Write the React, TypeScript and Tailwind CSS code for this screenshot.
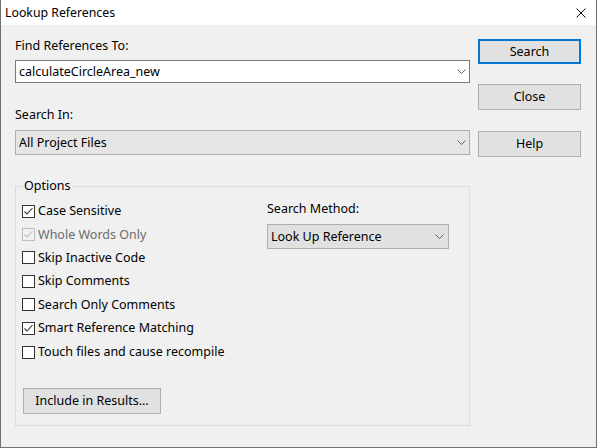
import React from "react";

function Chevron() {
  return (
    <svg width="9" height="5" viewBox="0 0 9 5" className="shrink-0">
      <path d="M0.5 0.5 L4.5 4.5 L8.5 0.5" fill="none" stroke="#606060" strokeWidth="1" />
    </svg>
  );
}

function Check({ color }: { color: string }) {
  return (
    <svg width="11" height="11" viewBox="0 0 11 11">
      <path d="M1.5 5.5 L4 8 L9.5 2" fill="none" stroke={color} strokeWidth="1.1" />
    </svg>
  );
}

type Opt = { label: string; checked?: boolean; disabled?: boolean; h: string };

const options: Opt[] = [
  { label: "Case Sensitive", checked: true, h: "h-[24px]" },
  { label: "Whole Words Only", checked: true, disabled: true, h: "h-[23px]" },
  { label: "Skip Inactive Code", h: "h-[23px]" },
  { label: "Skip Comments", h: "h-[24px]" },
  { label: "Search Only Comments", h: "h-[23px]" },
  { label: "Smart Reference Matching", checked: true, h: "h-[24px]" },
  { label: "Touch files and cause recompile", h: "h-[24px]" },
];

function CheckRow({ o }: { o: Opt }) {
  return (
    <div className={`${o.h} flex items-center`}>
      <div
        className={
          o.disabled
            ? "w-[13px] h-[13px] border border-[#bcbcbc] bg-[#f0f0f0] flex items-center justify-center"
            : "w-[13px] h-[13px] border border-[#333333] bg-white flex items-center justify-center"
        }
      >
        {o.checked ? <Check color={o.disabled ? "#bcbcbc" : "#333333"} /> : null}
      </div>
      <span className={o.disabled ? "ml-[3px] text-[#6d6d6d]" : "ml-[3px]"}>{o.label}</span>
    </div>
  );
}

export default function App() {
  return (
    <div className="w-[597px] h-[448px] bg-[#f0f0f0] border-x border-b border-[#707070] flex flex-col font-['Noto_Sans',sans-serif] text-[12.5px] leading-[16px] text-black">
      {/* Title bar */}
      <div className="h-[25px] bg-white flex items-center justify-between pl-[4px] pr-[10px] shrink-0">
        <span className="text-[12.3px]">Lookup References</span>
        <svg width="10" height="10" viewBox="0 0 10 10">
          <path d="M0.5 0.5 L9.5 9.5 M9.5 0.5 L0.5 9.5" stroke="#111" strokeWidth="1" />
        </svg>
      </div>

      {/* Body */}
      <div className="flex flex-row pl-[14px]">
        {/* Left column */}
        <div className="w-[455px] flex flex-col pt-[13px]">
          <div className="h-[16px]">Find References To:</div>
          <div className="mt-[6px] h-[23px] border border-[#7a7a7a] bg-white flex items-center justify-between pl-[3px] pr-[3px]">
            <span>calculateCircleArea_new</span>
            <Chevron />
          </div>

          <div className="mt-[24px] h-[16px]">Search In:</div>
          <div className="mt-[7px] h-[25px] border border-[#adadad] bg-[#e5e5e5] flex items-center justify-between pl-[3px] pr-[3px]">
            <span>All Project Files</span>
            <Chevron />
          </div>

          <fieldset className="mt-[23px] h-[248px] border border-[#dcdcdc] pl-[6px] pr-[6px]">
            <legend className="ml-0 px-[2px] h-[16px]">Options</legend>
            <div className="flex flex-row pt-[5px]">
              <div className="w-[245px] flex flex-col">
                {options.map((o) => (
                  <CheckRow key={o.label} o={o} />
                ))}
                <div className="mt-[24px] ml-[1px] w-[138px] h-[26px] border border-[#adadad] bg-[#e1e1e1] flex items-center justify-center">
                  Include in Results...
                </div>
              </div>
              <div className="flex flex-col pt-[2px]">
                <div className="h-[16px]">Search Method:</div>
                <div className="mt-[7px] w-[182px] h-[25px] border border-[#adadad] bg-[#e1e1e1] flex items-center justify-between pl-[3px] pr-[4px]">
                  <span>Look Up Reference</span>
                  <Chevron />
                </div>
              </div>
            </div>
          </fieldset>
        </div>

        {/* Right column */}
        <div className="ml-[8px] flex flex-col pt-[14px]">
          <div className="w-[103px] h-[25px] border-2 border-[#0078d7] bg-[#e1e1e1] flex items-center justify-center">
            Search
          </div>
          <div className="mt-[20px] w-[103px] h-[26px] border border-[#adadad] bg-[#e1e1e1] flex items-center justify-center">
            Close
          </div>
          <div className="mt-[21px] w-[103px] h-[26px] border border-[#adadad] bg-[#e1e1e1] flex items-center justify-center">
            Help
          </div>
        </div>
      </div>
    </div>
  );
}
